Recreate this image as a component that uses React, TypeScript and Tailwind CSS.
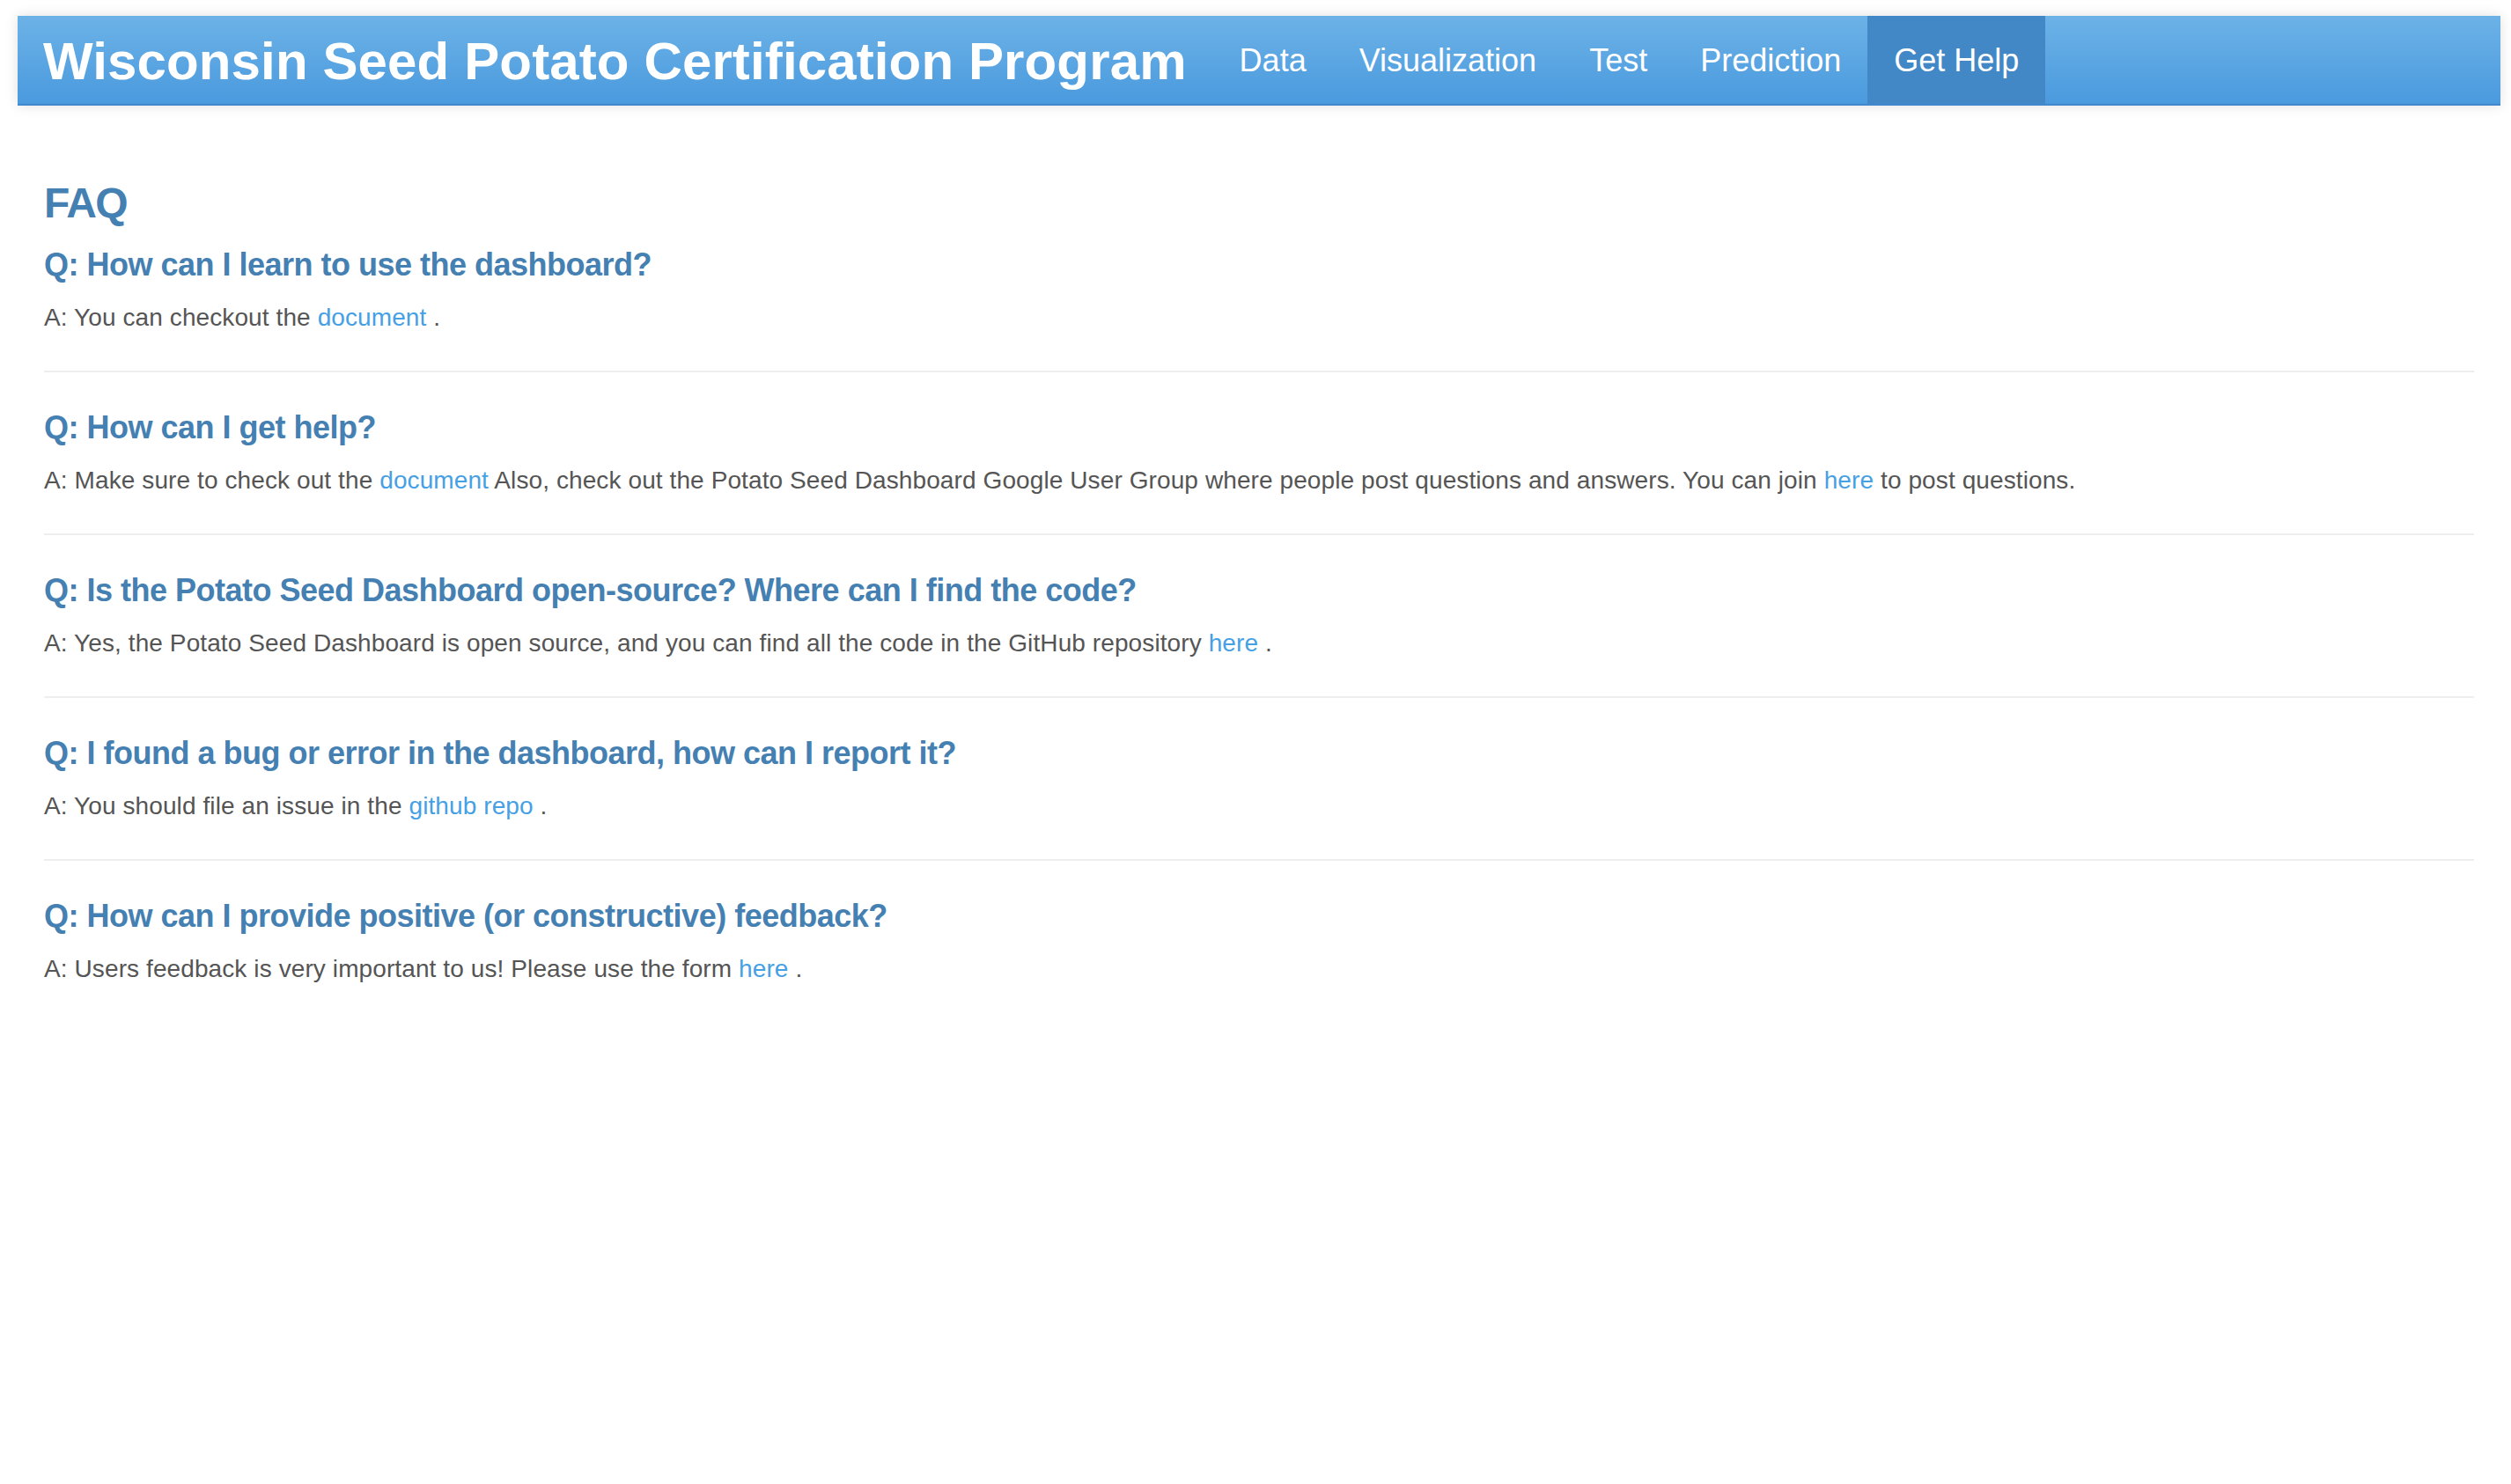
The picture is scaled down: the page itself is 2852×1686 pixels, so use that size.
import React from "react";

const font = { fontFamily: '"Liberation Sans", Arial, Helvetica, sans-serif' };

type Part = string | { link: string };

const faqs: { q: string; a: Part[] }[] = [
  { q: "Q: How can I learn to use the dashboard?", a: ["A: You can checkout the ", { link: "document" }, " ."] },
  {
    q: "Q: How can I get help?",
    a: [
      "A: Make sure to check out the ",
      { link: "document" },
      " Also, check out the Potato Seed Dashboard Google User Group where people post questions and answers. You can join ",
      { link: "here" },
      " to post questions.",
    ],
  },
  {
    q: "Q: Is the Potato Seed Dashboard open-source? Where can I find the code?",
    a: ["A: Yes, the Potato Seed Dashboard is open source, and you can find all the code in the GitHub repository ", { link: "here" }, " ."],
  },
  {
    q: "Q: I found a bug or error in the dashboard, how can I report it?",
    a: ["A: You should file an issue in the ", { link: "github repo" }, " ."],
  },
  {
    q: "Q: How can I provide positive (or constructive) feedback?",
    a: ["A: Users feedback is very important to us! Please use the form ", { link: "here" }, " ."],
  },
];

const navItems = ["Data", "Visualization", "Test", "Prediction", "Get Help"];

export default function App() {
  return (
    <div className="min-h-screen bg-white" style={font}>
      <div className="pt-[18px] px-[20px] w-[2860px]">
        <nav className="flex h-[102px] w-[2820px] bg-gradient-to-b from-[#6cb2e7] to-[#4a9ade] border-b-2 border-[#4188cc] shadow-[0_0_14px_rgba(0,0,0,0.12)]">
          <div className="flex items-center pl-[29px] pr-[30px] pt-[4px] text-[60px] leading-[40px] font-bold tracking-[0.13px] text-white whitespace-nowrap">
            Wisconsin Seed Potato Certification Program
          </div>
          {navItems.map((n) => (
            <div
              key={n}
              className={
                n === "Get Help"
                  ? "flex items-center px-[30px] pt-[2px] text-[36px] leading-[40px] text-white bg-[#4288c6] whitespace-nowrap"
                  : "flex items-center px-[30px] pt-[2px] text-[36px] leading-[40px] text-white whitespace-nowrap"
              }
            >
              {n}
            </div>
          ))}
        </nav>
      </div>
      <main className="px-[50px] w-[2860px]">
        <div className="w-[2760px]">
          <h3 className="mt-[84px] text-[48px] leading-[53px] font-bold tracking-[-1.5px] text-[#4580b2]">FAQ</h3>
          {faqs.map((f, i) => (
            <div key={i}>
              {i > 0 && <div className="h-[2px] bg-[#eeeeee]" />}
              <h4
                className={
                  i === 0
                    ? "mt-[24px] text-[36px] leading-[40px] font-bold tracking-[-0.5px] text-[#4580b2]"
                    : "mt-[43px] text-[36px] leading-[40px] font-bold tracking-[-0.5px] text-[#4580b2]"
                }
              >
                {f.q}
              </h4>
              <p className="mt-[20px] mb-[40px] text-[28px] leading-[40px] tracking-[0.1px] text-[#555555]">
                {f.a.map((p, j) =>
                  typeof p === "string" ? (
                    <span key={j} className="whitespace-pre">{p}</span>
                  ) : (
                    <a key={j} className="text-[#46a0e4]">{p.link}</a>
                  )
                )}
              </p>
            </div>
          ))}
        </div>
      </main>
    </div>
  );
}
